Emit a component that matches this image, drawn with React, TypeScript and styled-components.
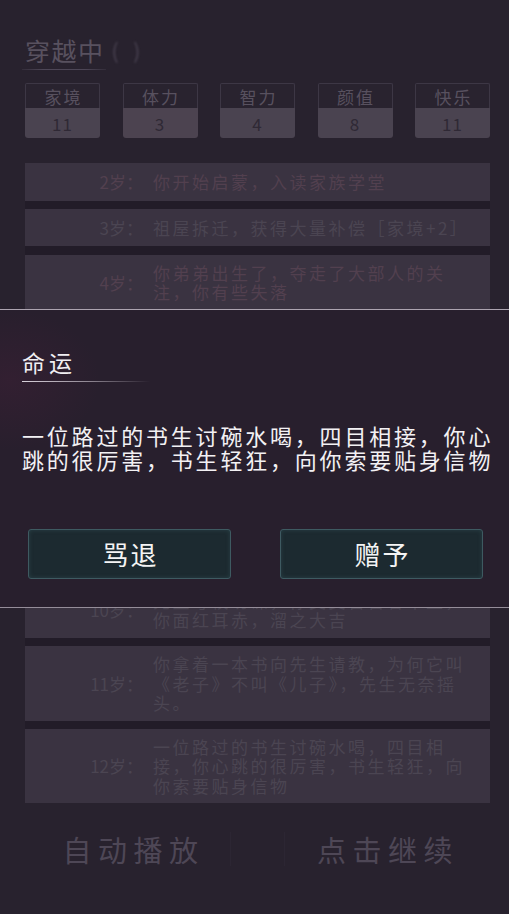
import React from 'react';
import styled, { createGlobalStyle } from 'styled-components';

const GlobalStyle = createGlobalStyle`
  html, body {
    margin: 0;
    padding: 0;
    background: #28222e;
  }
  body {
    font-family: "Noto Sans CJK SC", "Noto Sans", sans-serif;
  }
  * {
    box-sizing: border-box;
  }
`;

const Screen = styled.div`
  min-height: 914px;
  background: #28222e;
  display: flex;
  flex-direction: column;
`;

const Main = styled.main`
  padding: 34px 19px 0 25px;
  display: flex;
  flex-direction: column;
`;

const TitleRow = styled.div`
  display: flex;
  align-items: center;
  height: 32px;
`;

const Title = styled.h1`
  margin: 0;
  font-size: 25px;
  line-height: 32px;
  font-weight: 400;
  letter-spacing: 1.5px;
  color: #58515f;
`;

const Spinner = styled.span`
  margin-left: 7px;
  font-size: 21px;
  letter-spacing: 5px;
  white-space: pre;
  color: #4a4352;
  filter: blur(0.9px);
`;

const TitleRule = styled.div`
  margin: 2.5px 0 0 -3px;
  width: 84px;
  height: 1.5px;
  background: linear-gradient(90deg, rgba(77, 70, 86, 0.3), #4d4656 25%, #4d4656 75%, rgba(77, 70, 86, 0.3));
`;

const Stats = styled.div`
  margin-top: 13px;
  display: flex;
  justify-content: space-between;
`;

const Stat = styled.div`
  width: 75px;
  display: flex;
  flex-direction: column;
`;

const StatLabel = styled.div`
  height: 25px;
  border: 1px solid #3d3745;
  border-bottom: none;
  border-radius: 2px 2px 0 0;
  background: #29232f;
  display: flex;
  align-items: center;
  justify-content: center;
  padding-left: 2px;
  font-size: 17px;
  letter-spacing: 2px;
  color: #58515f;
`;

const StatValue = styled.div<{ $tint?: boolean }>`
  height: 30px;
  border-radius: 0 0 3px 3px;
  background: ${(p) => (p.$tint ? '#4c4350' : '#4a4350')};
  display: flex;
  align-items: center;
  justify-content: center;
  font-size: 17px;
  letter-spacing: 1px;
  color: #2f2935;
`;

const Log = styled.div`
  margin-top: 25px;
  display: flex;
  flex-direction: column;
  gap: 8.4px;
  background: #221c28;
`;

const Entry = styled.div<{ $warm?: boolean }>`
  display: grid;
  grid-template-columns: 118px 1fr;
  column-gap: 10px;
  align-items: center;
  min-height: 37.5px;
  padding: 8px 15px 8px 0;
  background: #3a3341;
  font-size: 17px;
  line-height: 19.5px;
  letter-spacing: 2.5px;
  color: ${(p) => (p.$warm ? '#52404f' : '#4b4552')};
`;

const Age = styled.span`
  text-align: right;
  white-space: nowrap;
  letter-spacing: 0;
`;

const EntryText = styled.span``;

const Footer = styled.footer`
  margin-top: 26px;
  height: 40px;
  display: flex;
  align-items: center;
`;

const FooterAction = styled.div<{ $side: 'left' | 'right' }>`
  ${(p) =>
    p.$side === 'left'
      ? 'width: 230px; padding-left: 37px;'
      : 'flex: 1; padding-left: 6px; padding-right: 24px;'}
  text-align: center;
  font-size: 29px;
  line-height: 40px;
  letter-spacing: 6.5px;
  color: #4e4756;
`;

const FooterDivider = styled.div`
  width: 55px;
  height: 34px;
  border-left: 1px solid #2c2633;
  border-right: 1px solid #2c2633;
`;

const Overlay = styled.div`
  position: fixed;
  inset: 0;
  padding-top: 2px;
  display: flex;
  align-items: center;
`;

const Dialog = styled.section`
  width: 100%;
  padding: 37px 12px 28px 22px;
  border-top: 1px solid #aca4b0;
  border-bottom: 1px solid #958d99;
  background:
    radial-gradient(ellipse 90px 70px at 10px 70px, rgba(88, 32, 64, 0.22), rgba(88, 32, 64, 0)),
    #281f2d;
`;

const DialogTitle = styled.h2`
  margin: 0;
  font-size: 23px;
  line-height: 30px;
  font-weight: 400;
  letter-spacing: 4px;
  color: #f1eff3;
`;

const DialogRule = styled.div`
  margin-top: 4px;
  width: 128px;
  height: 1.5px;
  background: linear-gradient(90deg, #d9d2dc, rgba(217, 210, 220, 0.55) 55%, rgba(217, 210, 220, 0));
`;

const DialogText = styled.p`
  margin: 40.5px 0 0;
  font-size: 22px;
  line-height: 24px;
  letter-spacing: 2.8px;
  color: #f3f1f4;
`;

const Actions = styled.div`
  margin: 58px 14px 0 6px;
  display: grid;
  grid-template-columns: 1fr 1fr;
  gap: 49px;
`;

const Choice = styled.button`
  height: 50px;
  padding: 0 0 0 2px;
  border: 1px solid #3e5a61;
  border-radius: 3px;
  background: #1c2a30;
  box-shadow: inset 0 0 4px rgba(80, 130, 140, 0.25);
  font-family: inherit;
  font-size: 26px;
  letter-spacing: 2px;
  color: #f4f4f4;
`;

const stats = [
  { label: '家境', value: 11 },
  { label: '体力', value: 3, tint: true },
  { label: '智力', value: 4 },
  { label: '颜值', value: 8 },
  { label: '快乐', value: 11 },
];

const entries = [
  { age: '2岁：', text: '你开始启蒙，入读家族学堂', warm: true },
  { age: '3岁：', text: '祖屋拆迁，获得大量补偿［家境+2］' },
  { age: '4岁：', text: '你弟弟出生了，夺走了大部人的关注，你有些失落', warm: true },
  { age: '5岁：', text: '你在学堂里背会了《千字文》' },
  { age: '6岁：', text: '你偷偷爬上院中的老槐树掏鸟窝，被父亲发现后罚跪祠堂' },
  { age: '7岁：', text: '你染上风寒，卧床半月' },
  { age: '8岁：', text: '先生夸你字写得端正，赏了你一方砚台' },
  { age: '9岁：', text: '你学会了下围棋' },
  { age: '10岁：', text: '先生考校功课，你支支吾吾答不上，你面红耳赤，溜之大吉' },
  { age: '11岁：', text: '你拿着一本书向先生请教，为何它叫《老子》不叫《儿子》，先生无奈摇头。' },
  { age: '12岁：', text: '一位路过的书生讨碗水喝，四目相接，你心跳的很厉害，书生轻狂，向你索要贴身信物' },
];

export default function App() {
  return (
    <>
      <GlobalStyle />
      <Screen>
        <Main>
          <TitleRow>
            <Title>穿越中</Title>
            <Spinner>( )</Spinner>
          </TitleRow>
          <TitleRule />
          <Stats>
            {stats.map((s) => (
              <Stat key={s.label}>
                <StatLabel>{s.label}</StatLabel>
                <StatValue $tint={s.tint}>{s.value}</StatValue>
              </Stat>
            ))}
          </Stats>
          <Log>
            {entries.map((e) => (
              <Entry key={e.age} $warm={e.warm}>
                <Age>{e.age}</Age>
                <EntryText>{e.text}</EntryText>
              </Entry>
            ))}
          </Log>
        </Main>
        <Footer>
          <FooterAction $side="left">自动播放</FooterAction>
          <FooterDivider />
          <FooterAction $side="right">点击继续</FooterAction>
        </Footer>
      </Screen>
      <Overlay>
        <Dialog>
          <DialogTitle>命运</DialogTitle>
          <DialogRule />
          <DialogText>
            一位路过的书生讨碗水喝，四目相接，你心跳的很厉害，书生轻狂，向你索要贴身信物
          </DialogText>
          <Actions>
            <Choice>骂退</Choice>
            <Choice>赠予</Choice>
          </Actions>
        </Dialog>
      </Overlay>
    </>
  );
}
